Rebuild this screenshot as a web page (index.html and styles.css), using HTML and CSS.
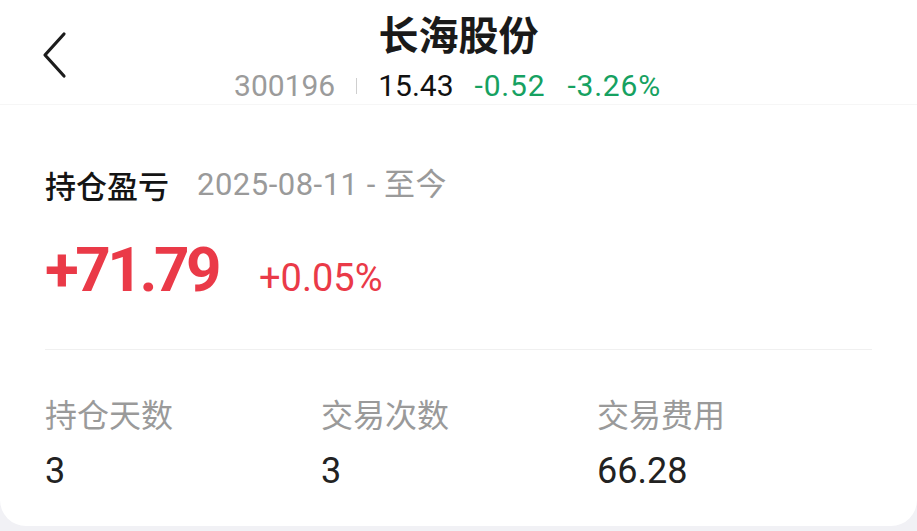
FILE: index.html
```html
<!DOCTYPE html>
<html lang="zh-CN">
<head>
    <meta charset="UTF-8">
    <meta name="viewport" content="width=device-width, initial-scale=1.0">
    <title>长海股份 持仓盈亏</title>
    <link rel="stylesheet" href="styles.css">
</head>
<body>
    <div class="header">
        <div class="back">
            <svg width="26" height="48" viewBox="0 0 26 48">
                <polyline points="22,3 3,24 22,45" fill="none" stroke="#1c1c1c" stroke-width="3.2" stroke-linecap="round" stroke-linejoin="round"/>
            </svg>
        </div>
        <div class="title-block">
            <div class="stock-name">长海股份</div>
            <div class="quote">
                <span class="code">300196</span>
                <span class="sep"></span>
                <span class="price">15.43</span>
                <span class="down">-0.52</span>
                <span class="down">-3.26%</span>
            </div>
        </div>
        <div></div>
    </div>

    <div class="card">
        <div class="pnl-head">
            <span class="pnl-title">持仓盈亏</span>
            <span class="pnl-range">2025-08-11 - 至今</span>
        </div>
        <div class="pnl-row">
            <span class="pnl-amount">+71.79</span>
            <span class="pnl-rate">+0.05%</span>
        </div>
        <div class="divider"></div>
        <div class="stats">
            <div class="stat">
                <div class="stat-label">持仓天数</div>
                <div class="stat-value">3</div>
            </div>
            <div class="stat">
                <div class="stat-label">交易次数</div>
                <div class="stat-value">3</div>
            </div>
            <div class="stat">
                <div class="stat-label">交易费用</div>
                <div class="stat-value">66.28</div>
            </div>
        </div>
    </div>
</body>
</html>
```

FILE: styles.css
```css
body {
    margin: 0;
    background: #f1f1f5;
    font-family: Roboto, "Noto Sans CJK SC", sans-serif;
    color: #1a1a1a;
}

.header {
    display: grid;
    grid-template-columns: 1fr auto 1fr;
    height: 105px;
    background: #fff;
    border-bottom: 1px solid #f6f6f6;
    box-sizing: border-box;
}

.back {
    padding: 31px 0 0 42px;
}

.title-block {
    text-align: center;
    padding-top: 9px;
}

.stock-name {
    font-family: "Noto Sans CJK SC", sans-serif;
    font-size: 40px;
    font-weight: 700;
    line-height: 48px;
}

.quote {
    margin-top: 11px;
    padding-right: 22px;
    display: flex;
    align-items: center;
    justify-content: center;
    font-size: 30px;
    line-height: 36px;
    white-space: nowrap;
}

.code {
    color: #9b9b9b;
}

.sep {
    display: inline-block;
    width: 0;
    height: 16px;
    border-left: 1.5px solid #cfcfcf;
    margin: 0 21px 0 21px;
}

.price {
    color: #111;
    margin-right: 21px;
}

.down {
    color: #16a161;
    margin-right: 22px;
    letter-spacing: 0.8px;
}

.down:last-child {
    margin-right: 0;
}

.card {
    background: #fff;
    border-radius: 0 0 26px 26px;
    padding: 60px 45px 33px;
}

.pnl-head {
    display: flex;
    align-items: center;
    line-height: 40px;
}

.pnl-title {
    font-family: "Noto Sans CJK SC", sans-serif;
    font-size: 31px;
    font-weight: 500;
    color: #141414;
}

.pnl-range {
    margin-left: 28px;
    font-size: 31px;
    letter-spacing: 0.5px;
    color: #9a9a9a;
}

.pnl-row {
    display: flex;
    align-items: baseline;
    margin-top: 30px;
}

.pnl-amount {
    font-size: 62px;
    font-weight: 700;
    line-height: 70px;
    letter-spacing: -3.5px;
    color: #ea3a48;
}

.pnl-rate {
    margin-left: 41px;
    font-size: 38px;
    color: #ea3a48;
}

.divider {
    height: 1px;
    background: #f0f0f0;
    margin: 44px 0 0;
}

.stats {
    display: grid;
    grid-template-columns: 276px 276px 1fr;
    margin-top: 43px;
}

.stat-label {
    font-family: "Noto Sans CJK SC", sans-serif;
    font-size: 32px;
    line-height: 40px;
    color: #9a9a9a;
}

.stat-value {
    margin-top: 16px;
    font-size: 36px;
    line-height: 44px;
    color: #222;
}
```
